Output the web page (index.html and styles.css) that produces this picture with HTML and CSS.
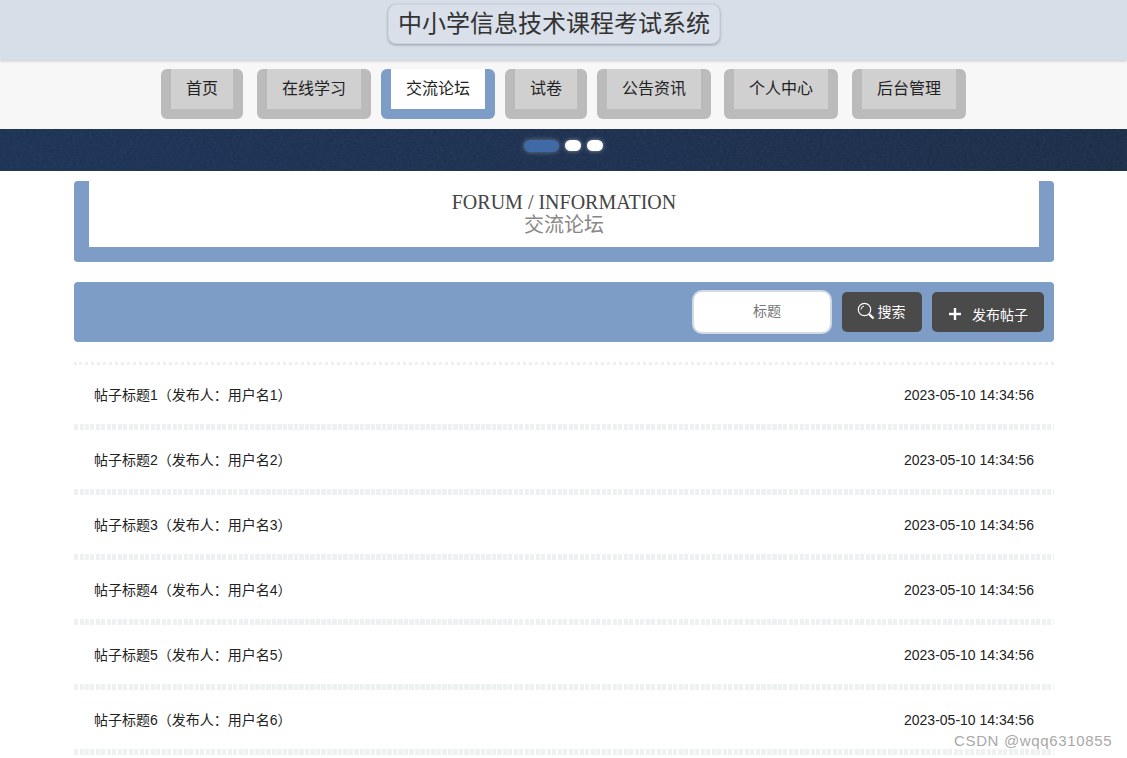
FILE: index.html
```html
<!DOCTYPE html>
<html lang="zh-CN">
<head>
    <meta charset="UTF-8">
    <meta name="viewport" content="width=device-width, initial-scale=1.0">
    <title>交流论坛</title>
    <link rel="stylesheet" href="styles.css">
</head>
<body>
    <header class="top">
        <h1 class="site-title">中小学信息技术课程考试系统</h1>
    </header>

    <nav class="nav">
        <a class="nav-item" href="#"><span>首页</span></a>
        <a class="nav-item far" href="#"><span>在线学习</span></a>
        <a class="nav-item active" href="#"><span>交流论坛</span></a>
        <a class="nav-item" href="#"><span>试卷</span></a>
        <a class="nav-item" href="#"><span>公告资讯</span></a>
        <a class="nav-item near" href="#"><span>个人中心</span></a>
        <a class="nav-item far" href="#"><span>后台管理</span></a>
    </nav>

    <div class="banner">
        <svg class="banner-noise" width="1127" height="42">
            <filter id="grain"><feTurbulence type="fractalNoise" baseFrequency="0.3 0.5" numOctaves="2" seed="4"/><feColorMatrix type="saturate" values="0"/></filter>
            <rect width="1127" height="42" filter="url(#grain)"/>
        </svg>
        <div class="dots">
            <i class="dot current"></i>
            <i class="dot"></i>
            <i class="dot"></i>
        </div>
    </div>

    <main class="wrap">
        <section class="page-head">
            <div class="page-head-en">FORUM / INFORMATION</div>
            <div class="page-head-cn">交流论坛</div>
        </section>

        <section class="toolbar">
            <input class="search-input" type="text" placeholder="标题">
            <button class="btn btn-find">
                <svg width="18" height="18" viewBox="0 0 18 18" fill="none" stroke="#fff">
                    <circle cx="7.5" cy="7.5" r="6.2" stroke-width="1.2"/>
                    <path d="M4 7.5a3.5 3.5 0 0 1 3-3.4" stroke-width="1"/>
                    <path d="M12 12l4.5 4.5" stroke-width="2.4"/>
                </svg>
                搜索
            </button>
            <button class="btn btn-add">
                <svg width="14" height="14" viewBox="0 0 14 14" fill="#fff">
                    <rect x="5.8" y="1" width="2.4" height="12"/>
                    <rect x="1" y="5.8" width="12" height="2.4"/>
                </svg>
                发布帖子
            </button>
        </section>

        <ul class="posts">
            <li class="post"><span class="post-title">帖子标题1（发布人：用户名1）</span><span>2023-05-10 14:34:56</span></li>
            <li class="post"><span class="post-title">帖子标题2（发布人：用户名2）</span><span>2023-05-10 14:34:56</span></li>
            <li class="post"><span class="post-title">帖子标题3（发布人：用户名3）</span><span>2023-05-10 14:34:56</span></li>
            <li class="post"><span class="post-title">帖子标题4（发布人：用户名4）</span><span>2023-05-10 14:34:56</span></li>
            <li class="post"><span class="post-title">帖子标题5（发布人：用户名5）</span><span>2023-05-10 14:34:56</span></li>
            <li class="post"><span class="post-title">帖子标题6（发布人：用户名6）</span><span>2023-05-10 14:34:56</span></li>
        </ul>
    </main>

    <div class="watermark">CSDN @wqq6310855</div>
</body>
</html>
```

FILE: styles.css
```css
*{
    box-sizing: border-box;
}
html, body{
    overflow: hidden;
}
body{
    margin: 0;
    height: 758px;
    position: relative;
    background-color: #fff;
    color: #222;
    font-family: "Liberation Sans", "Noto Sans CJK SC", sans-serif;
}

/* top title */
.top{
    height: 60px;
    padding: 4px 19px 0 0;
    display: flex;
    justify-content: center;
    align-items: flex-start;
    background-color: #d6dee8;
    box-shadow: 0 1px 3px rgba(0,0,0,.2);
    position: relative;
}
.site-title{
    margin: 0;
    width: 332px;
    height: 40px;
    line-height: 38px;
    text-align: center;
    font-size: 24px;
    font-weight: normal;
    color: #333;
    background-color: #d9e0ea;
    border: 1px solid #cdd5e0;
    border-radius: 8px;
    box-shadow: 0 1px 3px rgba(0,0,0,.3);
}

/* nav */
.nav{
    height: 69px;
    padding: 9px 0 0 161px;
    display: flex;
    gap: 10px;
    background-color: #f7f7f7;
}
.nav-item{
    height: 50px;
    padding: 0 10px 10px;
    background-color: #bbb;
    border-radius: 6px;
    color: #222;
    text-decoration: none;
    font-size: 16px;
}
.nav-item span{
    display: block;
    height: 40px;
    line-height: 40px;
    padding: 0 15px;
    background-color: #d0d0d0;
}
.nav-item.far{
    margin-left: 4px;
}
.nav-item.near{
    margin-left: 3px;
}
.nav-item.active{
    background-color: #7d9dc6;
}
.nav-item.active span{
    background-color: #fff;
    color: #222;
}

/* banner */
.banner{
    height: 42px;
    position: relative;
    overflow: hidden;
    background: linear-gradient(90deg, #1a3155, #1a2e4e 55%, #192b47);
}
.banner-noise{
    position: absolute;
    left: 0;
    top: 0;
    opacity: .08;
}
.dots{
    position: absolute;
    left: 524px;
    top: 11px;
    display: flex;
    gap: 6px;
}
.dot{
    width: 16px;
    height: 11px;
    border-radius: 6px;
    background-color: #fff;
    box-shadow: 0 0 4px rgba(255,255,255,.5);
}
.dot.current{
    width: 35px;
    height: 12px;
    background-color: #3f6aa6;
    box-shadow: 0 0 5px rgba(255,255,255,.35);
}

/* content */
.wrap{
    width: 980px;
    margin-left: 74px;
    padding-top: 10px;
}
.page-head{
    height: 81px;
    padding-top: 10px;
    border: 15px solid #7d9dc6;
    border-top: 0;
    border-radius: 4px;
    text-align: center;
    font-family: "Liberation Serif", "Noto Sans CJK SC", serif;
    font-size: 20px;
    line-height: 22px;
}
.page-head-en{
    color: #444;
}
.page-head-cn{
    color: #888;
    line-height: 25px;
}

.toolbar{
    height: 60px;
    margin-top: 20px;
    padding-right: 10px;
    display: flex;
    justify-content: flex-end;
    align-items: center;
    gap: 10px;
    background-color: #7d9dc6;
    border-radius: 4px;
}
.search-input{
    width: 140px;
    height: 44px;
    padding: 0 0 2px 10px;
    text-align: center;
    font-family: inherit;
    font-size: 14px;
    background-color: #fff;
    border: 2px solid #d4d9e0;
    border-radius: 10px;
    outline: none;
}
.btn{
    width: 80px;
    height: 40px;
    padding: 0;
    display: flex;
    align-items: center;
    justify-content: center;
    gap: 3px;
    font-family: inherit;
    font-size: 14px;
    color: #fff;
    background-color: #4a4a4a;
    border: 0;
    border-radius: 5px;
}
.btn-find{
    padding: 0 2px 2px 0;
}
.btn-add{
    width: 112px;
    gap: 10px;
    padding: 3px 0 0;
}

/* post list */
.posts{
    margin: 20px 0 0;
    padding: 0;
    list-style: none;
    border-top: 3px dotted #edf0f0;
}
.post{
    height: 65px;
    padding: 0 20px 6px;
    display: flex;
    justify-content: space-between;
    align-items: center;
    font-size: 14px;
    color: #222;
    background: repeating-linear-gradient(90deg, #eef1f1 0 4px, #fff 4px 5.5px) bottom / 100% 6px no-repeat;
}
.post-title{
    margin-bottom: 2px;
}

.watermark{
    position: absolute;
    left: 954px;
    top: 732px;
    font-size: 15px;
    letter-spacing: .65px;
    color: #a8a8a8;
}
```
